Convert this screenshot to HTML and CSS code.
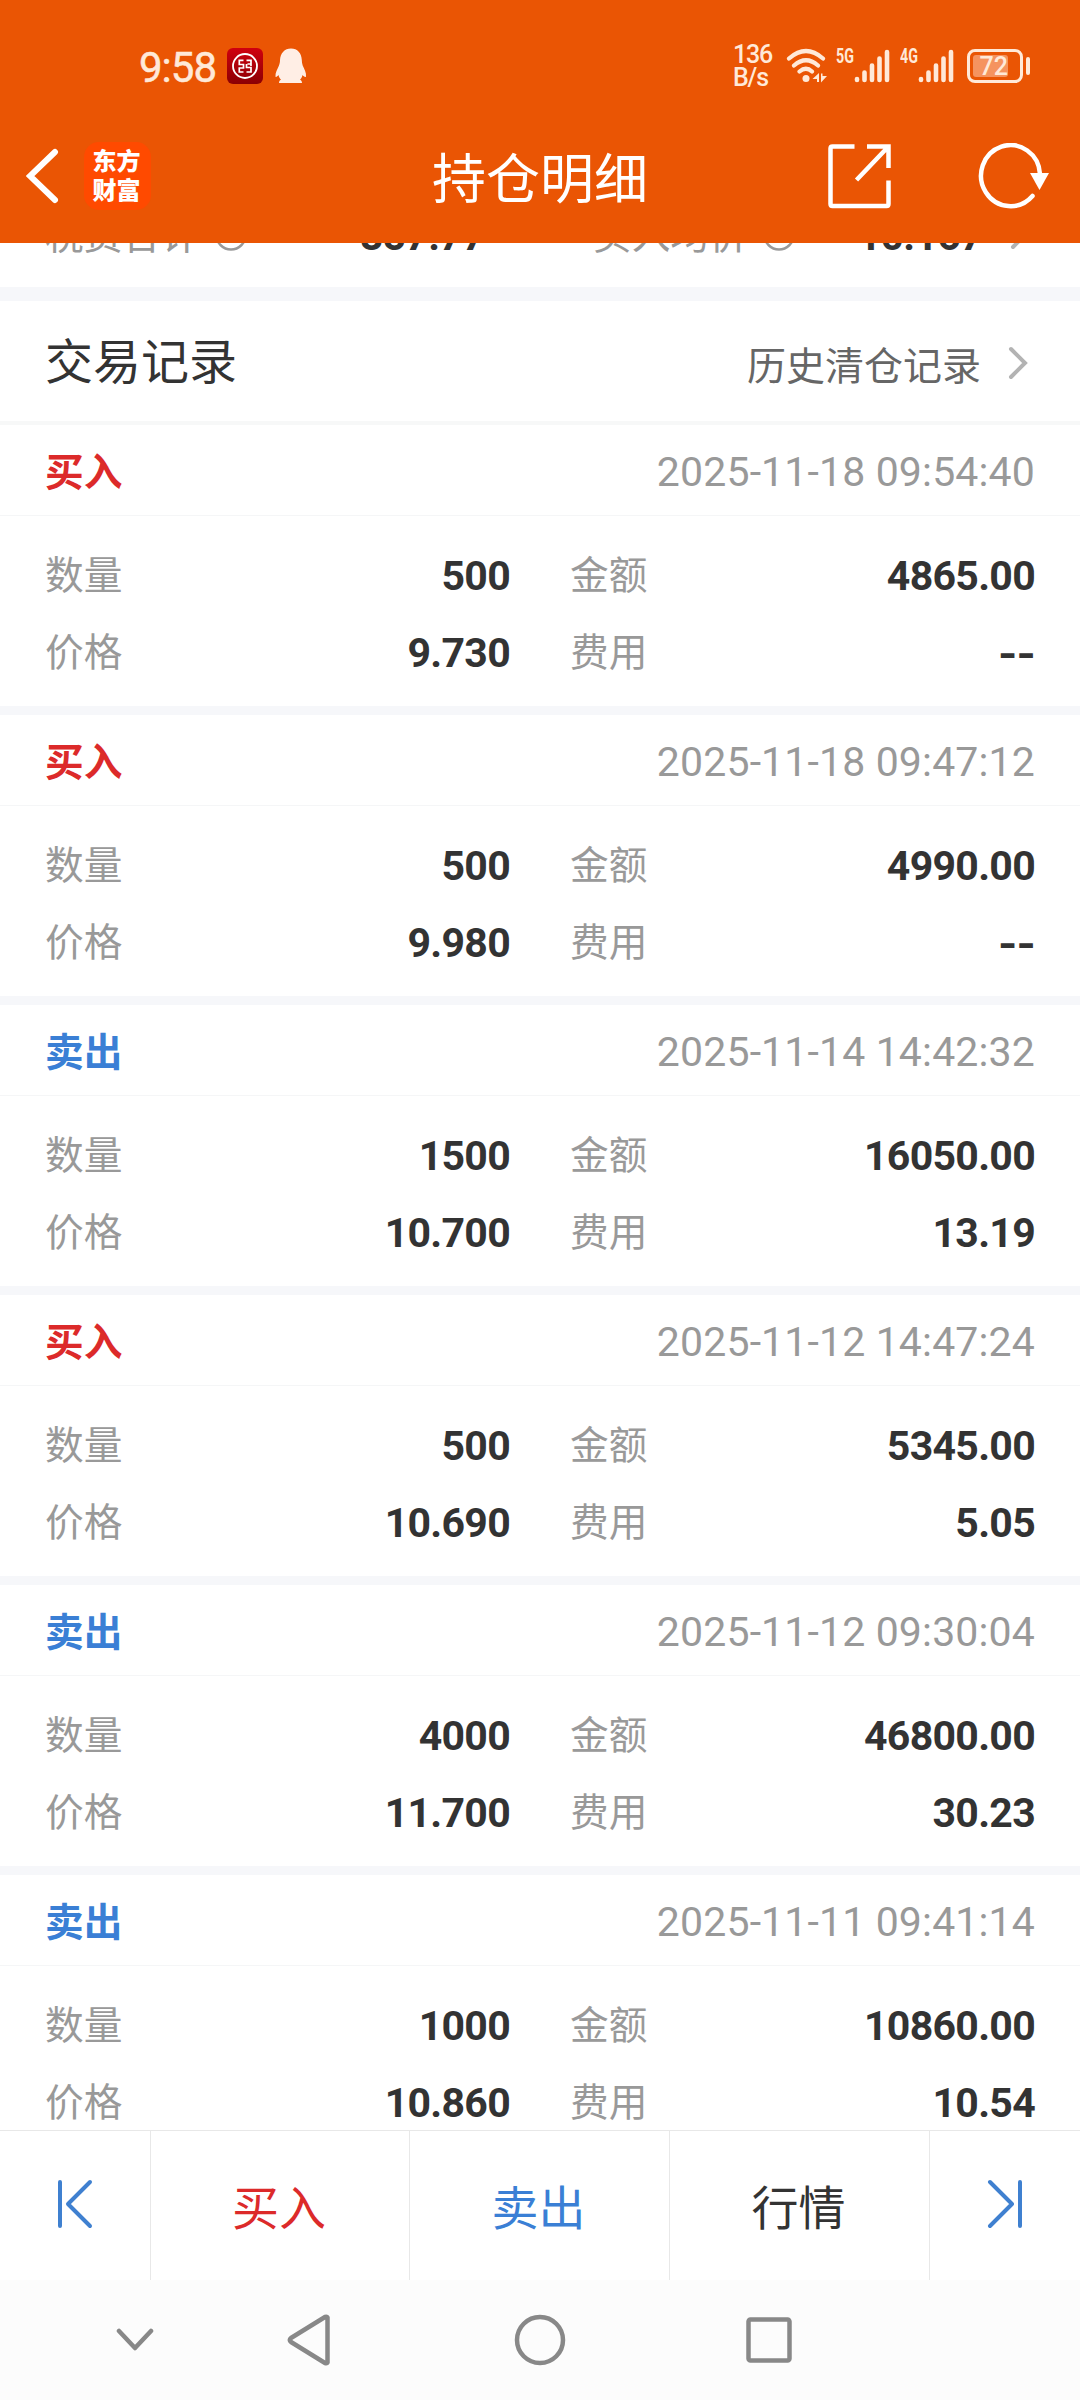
FILE: index.html
```
<!DOCTYPE html>
<html lang="zh-CN">
<head>
  <meta charset="UTF-8">
  <meta name="viewport" content="width=device-width, initial-scale=1.0">
  <title>持仓明细</title>
  <link rel="stylesheet" href="styles.css">
</head>
<body>

  <header class="top">
    <div class="status">
      <span class="time">9:58</span>
      <svg class="bank" width="36" height="36" viewBox="0 0 36 36" fill="none" stroke="#fff">
        <defs>
          <linearGradient id="red" x1="0" y1="0" x2="0" y2="1">
            <stop offset="0" stop-color="#d0000e"/>
            <stop offset="1" stop-color="#8b0004"/>
          </linearGradient>
        </defs>
        <rect width="36" height="36" rx="6" fill="url(#red)" stroke="none"/>
        <circle cx="18" cy="18" r="12" stroke-width="1.8"/>
        <path d="M16.500 12.300H12.300V16.500H16.500V20H12.300V24H16.500M19.500 12.300H24V16H20.500M24 16V18M19.500 24H24V19.500H19.500V16" stroke-width="1.700"/>
      </svg>
      <svg class="qq" width="32" height="36" viewBox="0 0 32 36" fill="#ffeee5">
        <path d="M16 .5C9.500.5 5.500 5 5 12c0 2-.3 3.500-1 5.500C2.500 21 0 25 .5 28.500c.3 1.300 2-.2 3-1.500.5 2 1.300 3.500 2.500 4.700-1.500.7-2 1.600-2 3.300h23c0-1.700-.6-2.600-2-3.300 1.300-1.200 2-2.700 2.500-4.700 1 1.300 3 2.800 3.500 1.500.5-3.500-1.700-7.500-3.300-11-.6-2-.9-3.500-.9-5.500C26.500 5 22.500.5 16 .5z"/>
      </svg>
      <div class="speed"><span>136</span><span>B/s</span></div>
      <svg class="wifi" width="42" height="36" viewBox="0 0 42 36" fill="none" stroke="#ffe9d8" stroke-width="4.200" stroke-linecap="round">
        <path d="M3 10.500Q20 -4.500 37 10.500M8 17.500Q20 7 32 17.500M13.500 23.500Q20 18 26 23.500"/>
        <circle cx="20" cy="30.500" r="3.500" fill="#ffe9d8" stroke="none"/>
        <path d="M33 25v9h-2v-3h-4.500zM35 34.500v-9h1.500v2.500h4.500z" fill="#ffe9d8" stroke="none"/>
      </svg>
      <div class="signal">
        <b>5G</b>
        <svg width="36" height="36" viewBox="0 0 36 36" stroke="#ffe9d8" stroke-width="4.600" stroke-linecap="round">
          <path d="M3 31v1M10.500 24.500v7.500M18 17.500v14.500M25.500 10.500v21.500M33 4v28"/>
        </svg>
      </div>
      <div class="signal second">
        <b>4G</b>
        <svg width="36" height="36" viewBox="0 0 36 36" stroke="#ffe9d8" stroke-width="4.600" stroke-linecap="round">
          <path d="M3 31v1M10.500 24.500v7.500M18 17.500v14.500M25.500 10.500v21.500M33 4v28"/>
        </svg>
      </div>
      <div class="battery"><span>72</span></div>
      <i class="battery-tip"></i>
    </div>

    <div class="titlebar">
      <svg class="back" width="34" height="60" viewBox="0 0 34 60" fill="none" stroke="#fff" stroke-width="6" stroke-linecap="round">
        <path d="M29 6L4 30l25 24"/>
      </svg>
      <div class="logo"><span>东方</span><span>财富</span></div>
      <h1>持仓明细</h1>
      <svg class="share" width="64" height="66" viewBox="0 0 64 66" fill="none" stroke="#fff" stroke-width="4.500">
        <path d="M26.500 3.500H4.500Q2.500 3.500 2.500 5.500V61Q2.500 63 4.500 63H58.500Q60.500 63 60.500 61V37.500M39 3.500H60.500V25M60 4L28.500 37"/>
      </svg>
      <svg class="refresh" width="72" height="66" viewBox="0 0 72 66" fill="none" stroke="#fff" stroke-width="4.500" stroke-linecap="round">
        <path d="M54.500 53A29.500 30.500 0 1 1 62 31"/>
        <path d="M52 30h19l-9.500 17z" fill="#fff" stroke="none"/>
      </svg>
    </div>
  </header>

  <main>
    <section class="summary">
      <div class="field">
        <label>税费合计</label>
        <svg width="32" height="32" viewBox="0 0 32 32" fill="none" stroke="#999" stroke-width="2.500"><circle cx="16" cy="16" r="14.500"/><path d="M16 8v10M16 20v2"/></svg>
        <strong>857.77</strong>
      </div>
      <div class="field">
        <label>买入均价</label>
        <svg width="32" height="32" viewBox="0 0 32 32" fill="none" stroke="#999" stroke-width="2.500"><circle cx="16" cy="16" r="14.500"/><path d="M16 8v10M16 20v2"/></svg>
        <strong>10.167</strong>
        <svg class="arrow" width="20" height="34" viewBox="0 0 20 34" fill="none" stroke="#b3b3b3" stroke-width="4" stroke-linecap="round"><path d="M3 3l14 14L3 31"/></svg>
      </div>
    </section>

    <section class="section-head">
      <h2>交易记录</h2>
      <a>历史清仓记录</a>
      <svg class="arrow" width="20" height="34" viewBox="0 0 20 34" fill="none" stroke="#b3b3b3" stroke-width="4" stroke-linecap="round"><path d="M3 3l14 14L3 31"/></svg>
    </section>

    <article class="record">
      <div class="record-head"><b class="buy">买入</b><time>2025-11-18 09:54:40</time></div>
      <div class="record-body">
        <label>数量</label><strong>500</strong><label>金额</label><strong>4865.00</strong>
        <label>价格</label><strong>9.730</strong><label>费用</label><strong class="none">--</strong>
      </div>
    </article>

    <article class="record">
      <div class="record-head"><b class="buy">买入</b><time>2025-11-18 09:47:12</time></div>
      <div class="record-body">
        <label>数量</label><strong>500</strong><label>金额</label><strong>4990.00</strong>
        <label>价格</label><strong>9.980</strong><label>费用</label><strong class="none">--</strong>
      </div>
    </article>

    <article class="record">
      <div class="record-head"><b class="sell">卖出</b><time>2025-11-14 14:42:32</time></div>
      <div class="record-body">
        <label>数量</label><strong>1500</strong><label>金额</label><strong>16050.00</strong>
        <label>价格</label><strong>10.700</strong><label>费用</label><strong>13.19</strong>
      </div>
    </article>

    <article class="record">
      <div class="record-head"><b class="buy">买入</b><time>2025-11-12 14:47:24</time></div>
      <div class="record-body">
        <label>数量</label><strong>500</strong><label>金额</label><strong>5345.00</strong>
        <label>价格</label><strong>10.690</strong><label>费用</label><strong>5.05</strong>
      </div>
    </article>

    <article class="record">
      <div class="record-head"><b class="sell">卖出</b><time>2025-11-12 09:30:04</time></div>
      <div class="record-body">
        <label>数量</label><strong>4000</strong><label>金额</label><strong>46800.00</strong>
        <label>价格</label><strong>11.700</strong><label>费用</label><strong>30.23</strong>
      </div>
    </article>

    <article class="record">
      <div class="record-head"><b class="sell">卖出</b><time>2025-11-11 09:41:14</time></div>
      <div class="record-body">
        <label>数量</label><strong>1000</strong><label>金额</label><strong>10860.00</strong>
        <label>价格</label><strong>10.860</strong><label>费用</label><strong>10.54</strong>
      </div>
    </article>
  </main>

  <footer class="actions">
    <div class="prev">
      <svg width="36" height="50" viewBox="0 0 36 50" fill="none" stroke="#3f80d0" stroke-width="4" stroke-linecap="round" stroke-linejoin="round"><path d="M3 3v44M33 3L11 25l22 22"/></svg>
    </div>
    <div class="buy">买入</div>
    <div class="sell">卖出</div>
    <div>行情</div>
    <div class="next">
      <svg width="36" height="50" viewBox="0 0 36 50" fill="none" stroke="#3f80d0" stroke-width="4" stroke-linecap="round" stroke-linejoin="round"><path d="M33 3v44M3 3l22 22L3 47"/></svg>
    </div>
  </footer>

  <nav class="system">
    <svg class="hide" width="38" height="24" viewBox="0 0 38 24" fill="none" stroke="#888" stroke-width="4.500" stroke-linecap="round" stroke-linejoin="round"><path d="M3 3l16 17L35 3"/></svg>
    <svg class="nav-back" width="44" height="52" viewBox="0 0 44 52" fill="none" stroke="#888" stroke-width="4.500" stroke-linejoin="round"><path d="M40.500 3.500v45Q40 49.500 38 49L4 28Q1.500 26 4 24L38 3Q40 2.500 40.500 3.500z"/></svg>
    <svg class="nav-home" width="52" height="52" viewBox="0 0 52 52" fill="none" stroke="#888" stroke-width="4.500"><circle cx="26" cy="26" r="23"/></svg>
    <svg class="nav-recent" width="46" height="46" viewBox="0 0 46 46" fill="none" stroke="#888" stroke-width="4.500"><rect x="2.500" y="2.500" width="41" height="41" rx="2"/></svg>
  </nav>

</body>
</html>
```

FILE: styles.css
```
* {
  box-sizing: border-box;
}

body {
  margin: 0;
  width: 1080px;
  height: 2400px;
  overflow: hidden;
  display: flex;
  flex-direction: column;
  background-color: #fff;
  color: #333;
  font-family: Roboto, "Noto Sans CJK SC", sans-serif;
  font-size: 38.7px;
}

svg {
  display: block;
  flex: none;
}

h1, h2 {
  margin: 0;
  font-weight: 400;
}

.buy {
  color: #dc2a2a;
}

.sell {
  color: #3a7fd5;
}

/* header */
.top {
  height: 243px;
  flex: none;
  background-color: #ea5504;
  color: #fff;
}

.status {
  height: 106px;
  padding: 26px 0 0 139px;
  display: flex;
  align-items: center;
  color: #ffe9d8;
}

.time {
  width: 88px;
  padding-top: 2px;
  font-size: 42px;
  letter-spacing: -1px;
  -webkit-text-stroke: 0.5px #ffe9d8;
}

.qq {
  margin-left: 12px;
}

.speed {
  width: 40px;
  margin-left: 426px;
  display: flex;
  flex-direction: column;
  font-size: 25px;
  font-weight: 500;
  line-height: 23px;
  letter-spacing: -1.2px;
}

.wifi {
  margin-left: 13px;
}

.signal {
  width: 54px;
  margin-left: 8px;
  display: flex;
}

.signal b {
  width: 18px;
  font-size: 21px;
  line-height: 17px;
  transform: scaleX(0.68);
  transform-origin: left top;
}

.second {
  margin-left: 10px;
}

.battery {
  width: 56px;
  height: 34px;
  margin-left: 13px;
  padding: 3px;
  border: 3px solid #ffe9d8;
  border-radius: 8px;
}

.battery span {
  display: block;
  width: 35px;
  height: 22px;
  border-radius: 3px;
  background-color: #f5935f;
  font-size: 25px;
  font-weight: 500;
  line-height: 24px;
  text-align: right;
}

.battery-tip {
  width: 4px;
  height: 18px;
  margin-left: 3px;
  border-radius: 3px;
  background-color: #ffe9d8;
}

.titlebar {
  height: 139px;
  display: flex;
  align-items: center;
  padding: 0 30px 0 26px;
}

.logo {
  width: 67px;
  height: 68px;
  margin-left: 24px;
  padding: 0 2px 3px 0;
  border-radius: 15px;
  background-color: #ff4a00;
  display: flex;
  flex-direction: column;
  align-items: center;
  justify-content: center;
  font-family: "Noto Sans CJK SC", sans-serif;
  font-size: 24px;
  font-weight: 900;
  line-height: 29px;
}

.titlebar h1 {
  margin-left: 281px;
  width: 220px;
  font-size: 54px;
}

.share {
  margin-left: 176px;
}

.refresh {
  margin-left: auto;
}

/* content */
main {
  height: 1887px;
  flex: none;
  overflow: hidden;
}

/* scrolled half under the header */
.summary {
  height: 58px;
  display: flex;
  align-items: flex-end;
  padding: 0 50px 25px 45px;
  border-bottom: 14px solid #f6f7fa;
}

.field {
  height: 54px;
  width: 440px;
  display: flex;
  align-items: center;
}

.field svg {
  margin-left: 15px;
}

.field strong {
  flex: 1;
  padding-top: 2px;
}

.field .arrow {
  margin: 0 0 4px 27px;
}

.field + .field {
  width: 437px;
  margin-left: 108px;
}

.section-head {
  height: 124px;
  display: flex;
  align-items: center;
  padding: 0 52px 0 45px;
  border-bottom: 4px solid #f7f8f8;
}

.section-head h2 {
  flex: 1;
  padding-bottom: 6px;
  font-size: 48px;
}

.section-head a {
  padding-top: 3px;
  color: #666;
  font-size: 39px;
  margin-right: 27px;
}

.section-head .arrow {
  margin-top: 3px;
}

label {
  color: #999;
  padding-bottom: 7px;
  white-space: nowrap;
}

strong {
  font-size: 41px;
  font-weight: 700;
  letter-spacing: -0.7px;
  text-align: right;
}

.none {
  font-family: Inter, Roboto, sans-serif;
}

.record {
  height: 290px;
  border-bottom: 9px solid #f6f7fa;
}

.record-head {
  height: 91px;
  display: flex;
  justify-content: space-between;
  align-items: center;
  padding: 0 45px;
  border-bottom: 1px solid #f5f6f7;
}

.record-head b {
  padding-bottom: 3px;
}

.record-head time {
  padding-top: 4px;
  color: #999;
  font-size: 41px;
  letter-spacing: 0.15px;
}

.record-body {
  display: grid;
  grid-template-columns: 78px 387px 137px 388px;
  grid-auto-rows: 77px;
  align-items: center;
  padding: 21px 45px 0;
}

.record-body label:nth-of-type(even) {
  padding-left: 60px;
}

/* bottom bars */
.actions {
  height: 150px;
  flex: none;
  display: grid;
  grid-template-columns: 151px 259px 260px 260px 150px;
  border-top: 1px solid #e8e8e8;
  font-size: 47px;
}

.actions div {
  display: flex;
  align-items: center;
  justify-content: center;
  padding: 0 2px 3px 0;
  border-right: 1px solid #e8e8e8;
}

.actions .prev {
  padding: 0 0 4px;
}

.actions .next {
  padding: 0 0 4px;
  border-right: none;
}

.system {
  height: 120px;
  flex: none;
  display: flex;
  align-items: center;
  padding-left: 116px;
  background-color: #fcfcfc;
}

.nav-back {
  margin-left: 133px;
}

.nav-home {
  margin-left: 183px;
}

.nav-recent {
  margin-left: 180px;
}
```
